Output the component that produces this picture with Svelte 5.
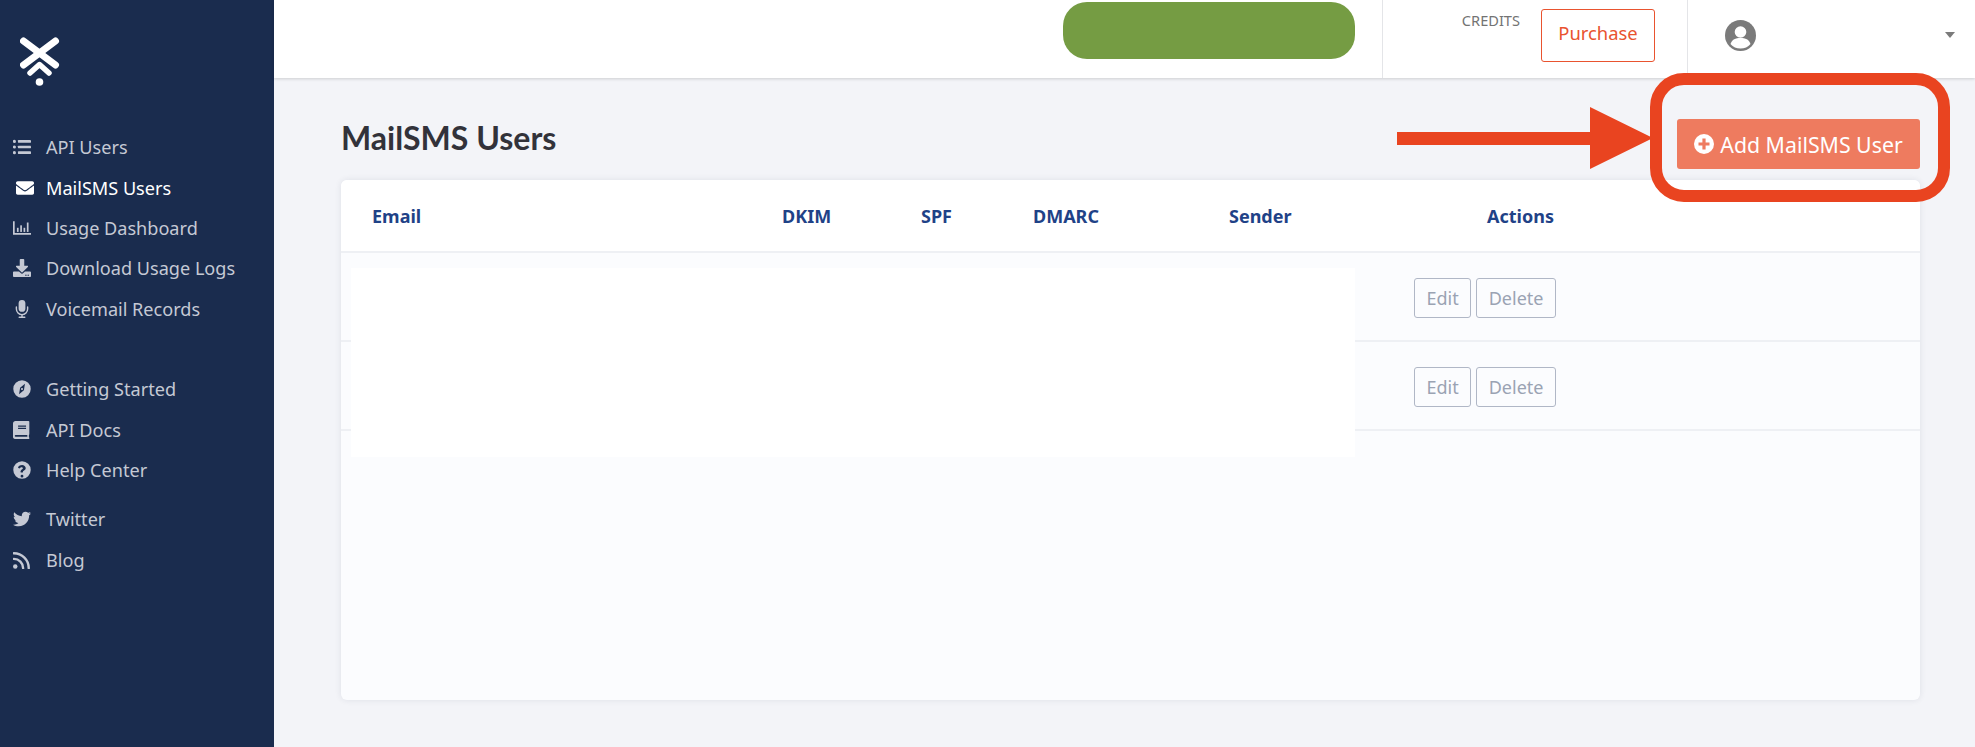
<script>
	const topLinks = [
		{ name: 'API Users', icon: 'list' },
		{ name: 'MailSMS Users', icon: 'mail', active: true },
		{ name: 'Usage Dashboard', icon: 'chart' },
		{ name: 'Download Usage Logs', icon: 'download' },
		{ name: 'Voicemail Records', icon: 'mic' }
	];
	const helpLinks = [
		{ name: 'Getting Started', icon: 'compass' },
		{ name: 'API Docs', icon: 'book' },
		{ name: 'Help Center', icon: 'help' }
	];
	const socialLinks = [
		{ name: 'Twitter', icon: 'twitter' },
		{ name: 'Blog', icon: 'rss' }
	];
	const groups = [topLinks, helpLinks, socialLinks];
	const columns = ['Email', 'DKIM', 'SPF', 'DMARC', 'Sender', 'Actions'];
	const rows = [1, 2];
</script>

{#snippet icon(kind)}
	<svg class="nav-icon" class:mail-icon={kind === 'mail'} viewBox="0 0 512 512" fill="currentColor">
		{#if kind === 'list'}
			<circle cx="40" cy="96" r="44" /><circle cx="40" cy="256" r="44" /><circle cx="40" cy="416" r="44" />
			<rect x="140" y="60" width="372" height="72" rx="14" /><rect x="140" y="220" width="372" height="72" rx="14" /><rect x="140" y="380" width="372" height="72" rx="14" />
		{:else if kind === 'mail'}
			<path d="M502.3 190.8c3.9-3.1 9.7-.2 9.7 4.7V400c0 26.5-21.5 48-48 48H48c-26.5 0-48-21.5-48-48V195.6c0-5 5.7-7.8 9.7-4.7 22.4 17.4 52.1 39.5 154.1 113.6 21.1 15.4 56.7 47.8 92.2 47.6 35.7.3 72-32.8 92.3-47.6 102-74.1 131.6-96.3 154-113.7zM256 320c23.2.4 56.6-29.2 73.4-41.4 132.7-96.3 142.8-104.7 173.4-128.7 5.8-4.5 9.2-11.5 9.2-18.9v-19c0-26.5-21.5-48-48-48H48C21.5 64 0 85.5 0 112v19c0 7.4 3.4 14.3 9.2 18.9 30.6 23.9 40.7 32.4 173.4 128.7 16.8 12.2 50.2 41.8 73.4 41.4z" />
		{:else if kind === 'chart'}
			<path d="M0 64h48v336h464v48H0z" />
			<rect x="112" y="250" width="48" height="118" /><rect x="206" y="180" width="48" height="188" /><rect x="300" y="250" width="48" height="118" /><rect x="394" y="100" width="48" height="268" />
		{:else if kind === 'download'}
			<path d="M216 0h80c13 0 24 11 24 24v168h88c18 0 27 21 14 34L270 378c-8 8-20 8-28 0L90 226c-13-13-4-34 14-34h88V24c0-13 11-24 24-24z" />
			<path d="M512 376v112c0 13-11 24-24 24H24c-13 0-24-11-24-24V376c0-13 11-24 24-24h147l49 49c20 20 52 20 72 0l49-49h147c13 0 24 11 24 24zM388 464a20 20 0 1 0-40 0 20 20 0 0 0 40 0zm64 0a20 20 0 1 0-40 0 20 20 0 0 0 40 0z" fill-rule="evenodd" />
		{:else if kind === 'mic'}
			<rect x="160" y="0" width="192" height="336" rx="96" />
			<path d="M96 200v56c0 88 72 160 160 160s160-72 160-160v-56" fill="none" stroke="currentColor" stroke-width="40" stroke-linecap="round" />
			<path d="M256 416v72M176 492h160" fill="none" stroke="currentColor" stroke-width="40" stroke-linecap="round" />
		{:else if kind === 'compass'}
			<path fill-rule="evenodd" d="M256 8a248 248 0 1 0 0 496 248 248 0 0 0 0-496zM340 110L310 290 172 402 202 222z" />
			<circle cx="256" cy="256" r="30" />
		{:else if kind === 'book'}
			<path fill-rule="evenodd" d="M70 0h370c13 0 24 11 24 24v350c0 8-4 14-9 18-4 15-4 57 0 72 6 5 9 11 9 18v16c0 13-11 14-24 14H80c-44 0-80-12-80-56V70C0 32 32 0 70 0zM144 134v20c0 4 4 8 8 8h212c4 0 8-4 8-8v-20c0-4-4-8-8-8H152c-4 0-8 4-8 8zm0 64v20c0 4 4 8 8 8h212c4 0 8-4 8-8v-20c0-4-4-8-8-8H152c-4 0-8 4-8 8zM408 448H80c-16 0-30-10-30-24s14-24 30-24h328c-2 16-2 32 0 48z" />
		{:else if kind === 'help'}
			<path fill-rule="evenodd" d="M256 8a248 248 0 1 0 0 496 248 248 0 0 0 0-496zm0 384a40 40 0 1 1 0 80 40 40 0 0 1 0-80zm2-280c56 0 104 38 104 90 0 72-78 74-78 102v10c0 7-5 12-12 12h-46c-7 0-12-5-12-12v-14c0-56 68-60 68-94 0-16-18-30-38-30-24 0-36 12-52 32-4 5-11 6-16 2l-28-21c-5-4-6-11-3-16 26-39 60-61 113-61z" />
		{:else if kind === 'twitter'}
			<path d="M459.37 151.716c.325 4.548.325 9.097.325 13.645 0 138.72-105.583 298.558-298.558 298.558-59.452 0-114.68-17.219-161.137-47.106 8.447.974 16.568 1.299 25.34 1.299 49.055 0 94.213-16.568 130.274-44.832-46.132-.975-84.792-31.188-98.112-72.772 6.498.974 12.995 1.624 19.818 1.624 9.421 0 18.843-1.3 27.614-3.573-48.081-9.747-84.143-51.98-84.143-102.985v-1.299c13.969 7.797 30.214 12.67 47.431 13.319-28.264-18.843-46.781-51.005-46.781-87.391 0-19.492 5.197-37.36 14.294-52.954 51.655 63.675 129.3 105.258 216.365 109.807-1.624-7.797-2.599-15.918-2.599-24.04 0-57.828 46.782-104.934 104.934-104.934 30.213 0 57.502 12.67 76.67 33.137 23.715-4.548 46.456-13.32 66.599-25.34-7.798 24.366-24.366 44.833-46.132 57.827 21.117-2.273 41.584-8.122 60.426-16.243-14.292 20.791-32.161 39.308-52.628 54.253z" />
		{:else if kind === 'rss'}
			<circle cx="64" cy="440" r="64" />
			<path d="M24 224c146 0 264 118 264 264M24 64c234 0 424 190 424 424" fill="none" stroke="currentColor" stroke-width="68" stroke-linecap="round" />
		{/if}
	</svg>
{/snippet}

<div class="app">
	<aside class="sidebar">
		<div class="logo">
			<svg width="42" height="52" viewBox="0 0 42 52" fill="none" stroke="#fff" stroke-linecap="round" stroke-linejoin="round">
				<path d="M3.500 5 L35.500 29" stroke-width="7" />
				<path d="M35.500 5 L3.500 29" stroke-width="7" />
				<path d="M10 37 L19.500 28.500 L29 37" stroke-width="5.500" />
				<circle cx="19.500" cy="46" r="3.800" fill="#fff" stroke="none" />
			</svg>
		</div>
		{#each groups as links}
			<nav class="group">
				{#each links as link}
					<a href="#top" class="nav-link" class:active={link.active}>
						{@render icon(link.icon)}
						<span>{link.name}</span>
					</a>
				{/each}
			</nav>
		{/each}
	</aside>

	<div class="main">
		<header class="topbar">
			<div class="status-pill"></div>
			<div class="credits">
				<span class="credits-label">CREDITS</span>
				<button class="purchase">Purchase</button>
			</div>
			<div class="account">
				<svg width="31" height="31" viewBox="0 0 31 31">
					<circle cx="15.500" cy="15.500" r="15.500" fill="#7b7b7b" />
					<circle cx="15.500" cy="12" r="5.800" fill="#fff" />
					<path d="M5.500 24c1.500-4.500 5-6 10-6s8.500 1.500 10 6c-2.500 3-6 4.600-10 4.600s-7.500-1.600-10-4.600z" fill="#fff" />
				</svg>
				<span class="caret"></span>
			</div>
		</header>

		<main class="content">
			<div class="title-row">
				<h1>MailSMS Users</h1>
				<button class="add-user">
					<svg width="20" height="20" viewBox="0 0 20 20">
						<circle cx="10" cy="10" r="10" fill="#fff" />
						<path d="M10 4.500v11M4.500 10h11" stroke="#ee7b5f" stroke-width="3.200" />
					</svg>
					Add MailSMS User
				</button>
			</div>

			<section class="card">
				<div class="table-row table-head">
					{#each columns as column}
						<div>{column}</div>
					{/each}
				</div>
				{#each rows as row}
					<div class="table-row body-row">
						<div class="row-actions">
							<button class="ghost">Edit</button>
							<button class="ghost">Delete</button>
						</div>
					</div>
				{/each}
				<div class="redaction"></div>
			</section>
		</main>
	</div>

	<div class="callout"></div>
	<svg class="arrow" width="256" height="62" viewBox="0 0 256 62">
		<path d="M0 25h193V0l63 31-63 31V38H0z" fill="#e94420" />
	</svg>
</div>

<style>
	:global(body) {
		margin: 0;
		background: #f3f4f8;
	}
	button {
		font-family: 'Noto Sans', sans-serif;
		cursor: pointer;
	}
	.app {
		display: flex;
		position: relative;
		height: 747px;
		overflow: hidden;
		font-family: 'Noto Sans', sans-serif;
	}
	.sidebar {
		width: 274px;
		flex: none;
		background: #1a2c4e;
		box-sizing: border-box;
		padding-top: 36px;
	}
	.logo {
		height: 91px;
		padding-left: 20px;
	}
	.group {
		display: flex;
		flex-direction: column;
		margin-bottom: 40px;
		padding-left: 13px;
	}
	.group:nth-of-type(2) {
		margin-bottom: 9px;
	}
	.nav-link {
		display: flex;
		align-items: center;
		gap: 15px;
		height: 40.400px;
		color: #c5c9d4;
		font-size: 18.100px;
		text-decoration: none;
	}
	.nav-link.active {
		color: #fff;
	}
	.nav-icon {
		width: 18px;
		height: 18px;
		flex: none;
	}
	.mail-icon {
		margin-left: 3px;
		margin-right: -3px;
	}
	.main {
		flex: 1;
		min-width: 0;
		display: flex;
		flex-direction: column;
	}
	.topbar {
		height: 78px;
		flex: none;
		background: #fff;
		box-shadow: 0 1px 3px rgba(0, 0, 0, 0.16);
		display: flex;
		align-items: stretch;
		position: relative;
	}
	.status-pill {
		width: 292px;
		height: 57px;
		margin: 2px 27px 0 789px;
		background: #759c43;
		border-radius: 24px;
		flex: none;
	}
	.credits {
		width: 306px;
		box-sizing: border-box;
		flex: none;
		border-left: 1px solid #e4e5e8;
		border-right: 1px solid #e4e5e8;
		display: flex;
		justify-content: flex-end;
		align-items: flex-start;
		gap: 21px;
		padding: 9px 32px 0 0;
	}
	.credits-label {
		font-size: 14.600px;
		color: #737373;
		margin-top: 1px;
	}
	.purchase {
		width: 114px;
		height: 53px;
		background: #fff;
		border: 1px solid #e9532f;
		border-radius: 3px;
		color: #e9532f;
		font-size: 18.400px;
		padding: 0 0 7px;
	}
	.account {
		flex: 1;
		display: flex;
		align-items: center;
		justify-content: space-between;
		padding: 0 20px 0 37px;
		height: 70px;
	}
	.caret {
		border-left: 5px solid transparent;
		border-right: 5px solid transparent;
		border-top: 6px solid #7b7b7b;
	}
	.content {
		flex: 1;
		padding: 41px 55px 47px 67px;
		display: flex;
		flex-direction: column;
	}
	.title-row {
		display: flex;
		justify-content: space-between;
		height: 61px;
	}
	h1 {
		margin: 0;
		font-family: Lato, sans-serif;
		font-weight: 700;
		font-size: 32px;
		line-height: 38px;
		color: #32323a;
	}
	.add-user {
		width: 243px;
		height: 50px;
		background: #ee7b5f;
		border: none;
		border-radius: 3px;
		color: #fff;
		font-size: 21.300px;
		display: flex;
		align-items: center;
		justify-content: center;
		gap: 6px;
		padding: 0;
	}
	.card {
		flex: 1;
		position: relative;
		background: #fbfcfe;
		border-radius: 6px;
		overflow: hidden;
		box-shadow: 0 0 6px rgba(40, 50, 80, 0.1);
	}
	.table-row {
		display: grid;
		grid-template-columns: 410px 139px 112px 196px 258px 1fr;
		padding-left: 31px;
		border-bottom: 2px solid #eef0f4;
		box-sizing: border-box;
	}
	.table-head {
		height: 73px;
		align-items: center;
		background: #fff;
		color: #1f4287;
		font-weight: 700;
		font-size: 18px;
	}
	.body-row {
		height: 89px;
		padding-top: 25px;
	}
	.row-actions {
		grid-column: 6;
		display: flex;
		gap: 5px;
		margin-left: -73px;
		align-items: flex-start;
	}
	.ghost {
		height: 40px;
		background: transparent;
		border: 1px solid #b0b7c6;
		border-radius: 3px;
		color: #9aa3b3;
		font-size: 18px;
		padding: 0 11.500px;
	}
	.redaction {
		position: absolute;
		left: 10px;
		top: 88px;
		width: 1004px;
		height: 189px;
		background: #fff;
	}
	.callout {
		position: absolute;
		left: 1650px;
		top: 73px;
		width: 300px;
		height: 129px;
		box-sizing: border-box;
		border: 12px solid #e94420;
		border-radius: 34px;
	}
	.arrow {
		position: absolute;
		left: 1397px;
		top: 107px;
	}
</style>
